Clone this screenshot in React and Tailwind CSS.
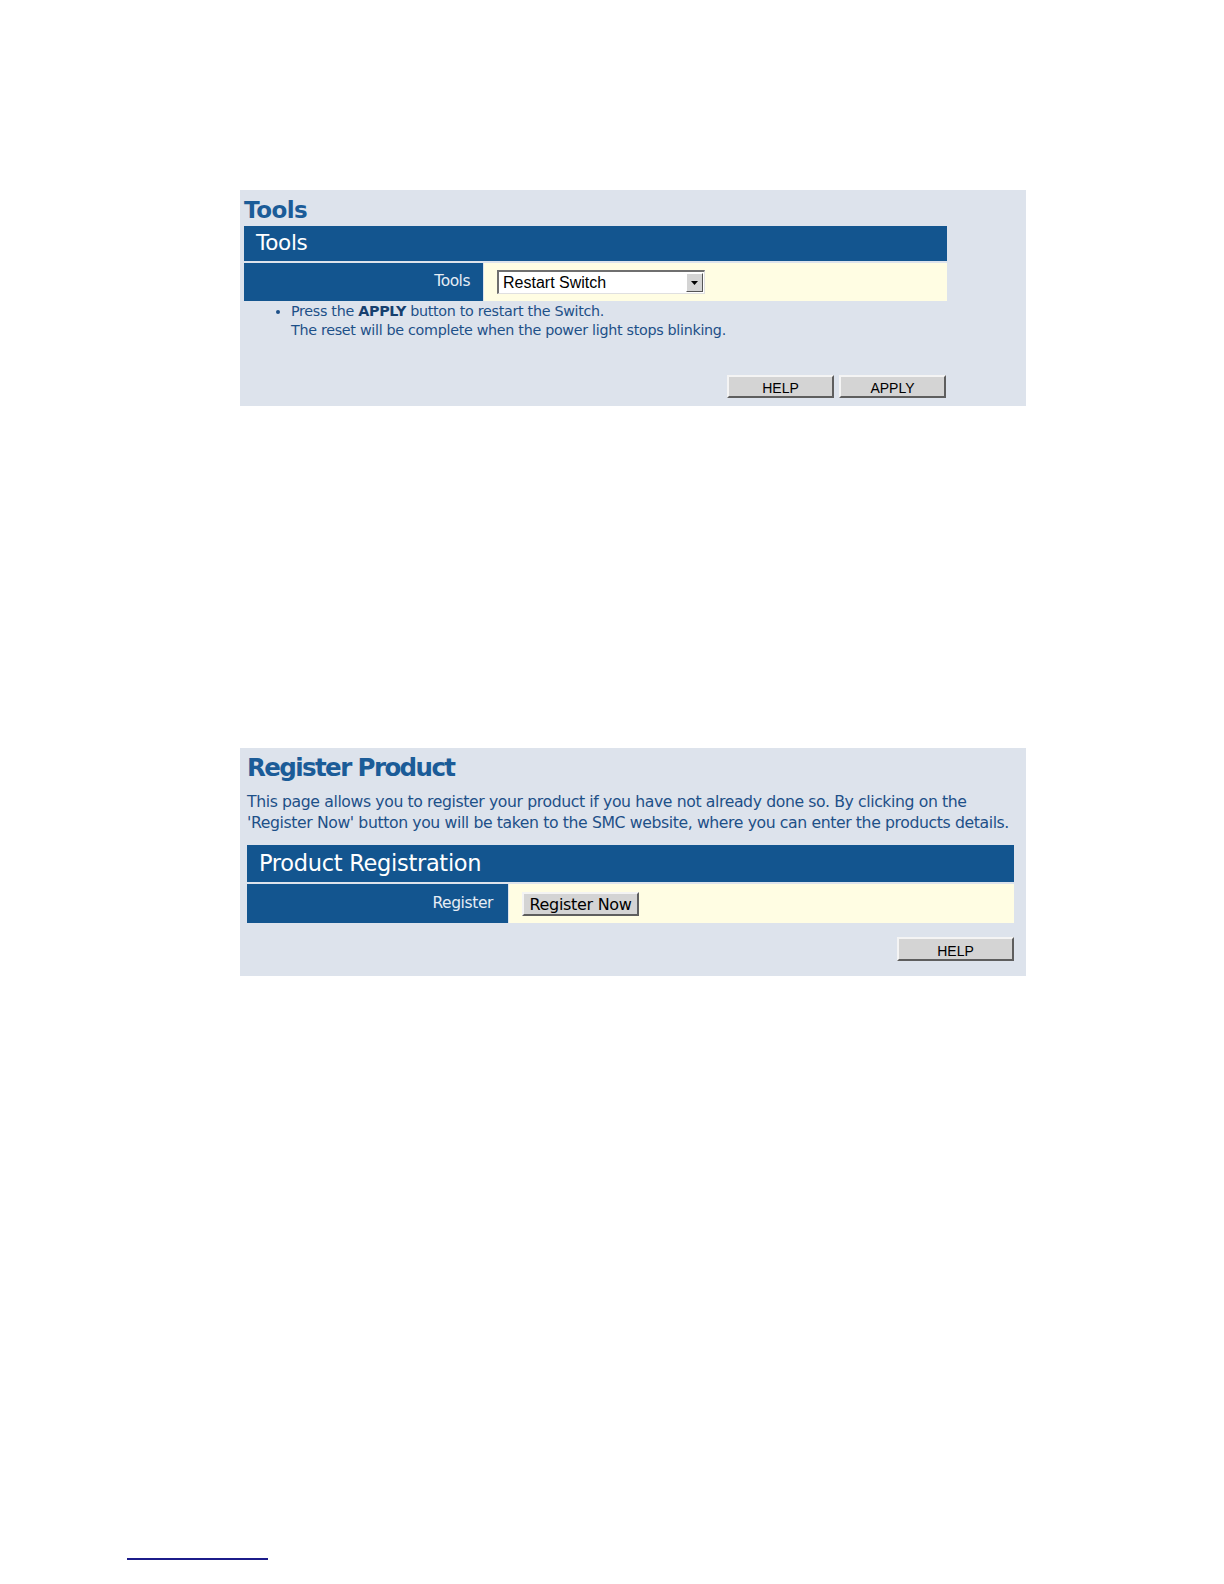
import React from 'react';

const uiFont = { fontFamily: '"DejaVu Sans", Verdana, sans-serif' };
const arial = { fontFamily: '"Liberation Sans", Arial, sans-serif' };

function GrayButton({ children, className = '', font = arial }) {
  return (
    <button
      type="button"
      className={`bg-[#d4d4d4] text-black leading-none border-t-2 border-l-2 border-t-[#f4f4f4] border-l-[#f4f4f4] border-b-2 border-r-2 border-b-[#5e5e5e] border-r-[#5e5e5e] flex items-center justify-center pt-[3px] ${className}`}
      style={font}
    >
      {children}
    </button>
  );
}

function ToolsPanel() {
  return (
    <div className="w-[786px] h-[216px] bg-[#dde3ec] pl-[4px] flex flex-col" style={uiFont}>
      <h1 className="text-[#1b5c98] font-bold text-[23px] leading-none tracking-[-0.5px] mt-[5px] h-[31px] flex items-center">
        Tools
      </h1>
      <div className="w-[703px] h-[35px] bg-[#13558f] text-white text-[21.5px] flex items-center pl-[12px] tracking-[-0.3px]">
        Tools
      </div>
      <div className="w-[703px] h-[38px] mt-[2px] flex gap-[1px]">
        <div className="w-[239px] bg-[#13558f] text-[#e6edf5] text-[15.5px] flex items-center justify-end pr-[13px] tracking-[-0.5px]">
          Tools
        </div>
        <div className="flex-1 bg-[#fffde3] flex items-center pl-[13px]">
          <div className="w-[208px] h-[24px] bg-white border-t-2 border-l-2 border-t-[#6f6f6f] border-l-[#6f6f6f] border-b border-r border-b-[#e0e0e0] border-r-[#e0e0e0] flex items-center">
            <span className="flex-1 pl-[4px] text-[16px] text-black" style={arial}>
              Restart Switch
            </span>
            <span className="w-[17px] h-[19px] mr-[1px] bg-[#d4d4d4] border-t border-l border-t-white border-l-white border-b border-r border-b-[#555] border-r-[#555] flex items-center justify-center">
              <svg width="7" height="4" viewBox="0 0 7 4">
                <path d="M0 0h7L3.5 4z" fill="#000" />
              </svg>
            </span>
          </div>
        </div>
      </div>
      <ul className="text-[#1d5088] text-[14.3px] leading-[19px] tracking-[-0.3px] mt-[1px] pl-[33px] list-disc list-outside ml-[14px]">
        <li>
          Press the <b className="text-[#163f6e]">APPLY</b> button to restart the Switch.
          <br />
          The reset will be complete when the power light stops blinking.
        </li>
      </ul>
      <div className="w-[703px] flex justify-end gap-[5px] mt-[35px] pr-[1px]">
        <GrayButton className="w-[107px] h-[23px] text-[14px]">HELP</GrayButton>
        <GrayButton className="w-[107px] h-[23px] text-[14px]">APPLY</GrayButton>
      </div>
    </div>
  );
}

function RegisterPanel() {
  return (
    <div className="w-[786px] h-[228px] bg-[#dde3ec] pl-[7px] flex flex-col" style={uiFont}>
      <h1 className="text-[#1b5c98] font-bold text-[24.5px] leading-none tracking-[-1.6px] mt-[6px] h-[29px] flex items-center">
        Register Product
      </h1>
      <p className="text-[#1d5088] text-[15.7px] leading-[21px] tracking-[-0.4px] mt-[8px]">
        This page allows you to register your product if you have not already done so. By clicking on the
        <br />
        'Register Now' button you will be taken to the SMC website, where you can enter the products details.
      </p>
      <div className="w-[767px] h-[37px] mt-[12px] bg-[#13558f] text-white text-[22.5px] flex items-center pl-[12px] tracking-[-0.3px]">
        Product Registration
      </div>
      <div className="w-[767px] h-[39px] mt-[2px] flex gap-[1px]">
        <div className="w-[261px] bg-[#13558f] text-[#e6edf5] text-[15.5px] flex items-center justify-end pr-[15px] tracking-[-0.4px]">
          Register
        </div>
        <div className="flex-1 bg-[#fffde3] flex items-center pl-[13px]">
          <GrayButton className="w-[117px] h-[24px] text-[16px] tracking-[-0.3px]" font={uiFont}>
            Register Now
          </GrayButton>
        </div>
      </div>
      <div className="w-[767px] flex justify-end mt-[14px]">
        <GrayButton className="w-[117px] h-[24px] text-[14px]">HELP</GrayButton>
      </div>
    </div>
  );
}

export default function App() {
  return (
    <div className="h-[1584px] overflow-hidden bg-white">
      <div className="pt-[190px] pl-[240px] flex flex-col">
        <ToolsPanel />
        <div className="h-[342px]" />
        <RegisterPanel />
      </div>
      <div className="ml-[127px] mt-[582px] w-[141px] h-[2px] bg-[#1c1c8a]" />
    </div>
  );
}
